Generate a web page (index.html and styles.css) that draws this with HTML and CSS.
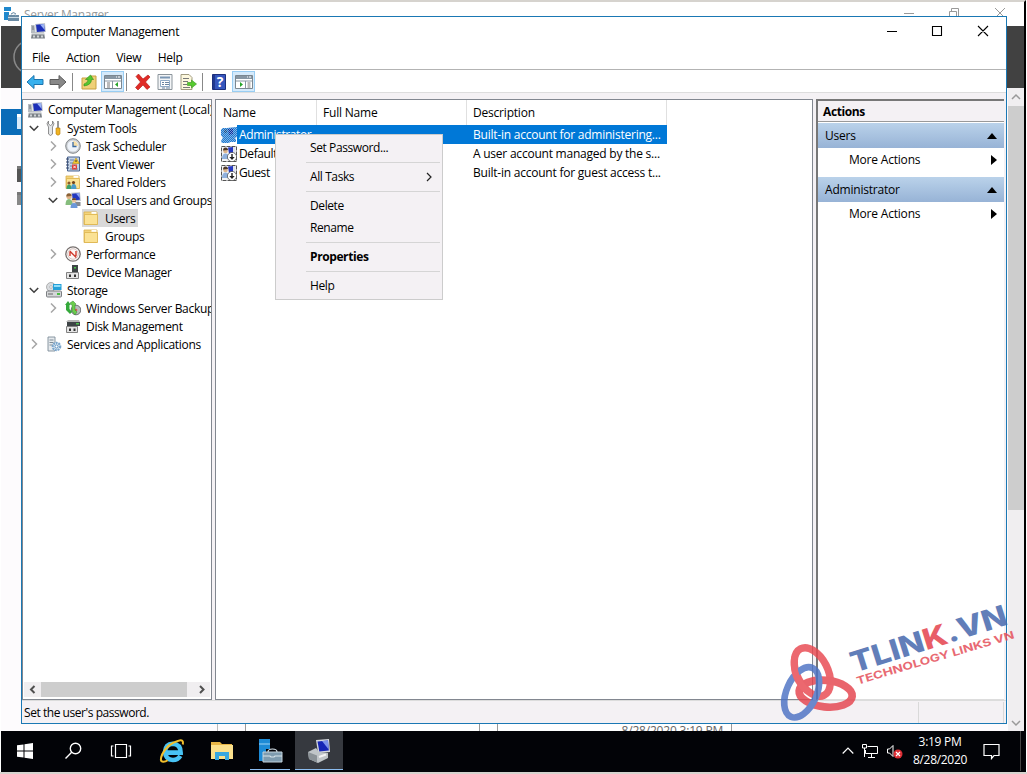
FILE: index.html
```html
<!DOCTYPE html>
<html lang="en">
<head>
    <meta charset="UTF-8">
    <meta name="viewport" content="width=device-width, initial-scale=1.0">
    <title>Computer Management</title>
    <link rel="stylesheet" href="styles.css">
</head>
<body>
    <!-- shared icons -->
    <svg class="sprite" width="0" height="0">
        <symbol id="computer" viewBox="0 0 16 16">
            <path d="M5 1l10-1 1 9-10 1z" fill="#c3c8ce"/>
            <path d="M6 1.800l8-.8 1 7.200-8 .8z" fill="#1c2fb8"/>
            <path d="M10 1.500l4-.4.700 6z" fill="#9db4f5"/>
            <path d="M1 2h3.500l1 8H1z" fill="#b6bcc2"/>
            <path d="M2 4h2M2 6h2" stroke="#70777d"/>
            <path d="M2 9.500h12l1 6H1z" fill="#7c8288"/>
            <path d="M2 9.500h12v2H2z" fill="#d5d8da"/>
            <path d="M3 12.500h2v2H3zM7 12.500h2v2H7zM11 12.500h2v2h-2z" fill="#d0d4d6"/>
        </symbol>
        <symbol id="tools" viewBox="0 0 16 16">
            <path d="M2.500 1v3l2 1.500 2-1.500V1q3 2.500 0 6v7q-2 3-4 0V7q-3-3.500 0-6z" fill="#e4e6e8" stroke="#777" stroke-width=".8"/>
            <path d="M11 1h2v7h-2z" fill="#999"/>
            <path d="M10 8h4v6q-2 2.500-4 0z" fill="#f0b323" stroke="#b67c0b" stroke-width=".6"/>
        </symbol>
        <symbol id="clock" viewBox="0 0 16 16">
            <circle cx="8" cy="8" r="7.300" fill="#c9cdd1" stroke="#84888c"/>
            <circle cx="8" cy="8" r="5.600" fill="#eef3fa"/>
            <path d="M8 3A5 5 0 0 1 13 8H8z" fill="#f7dfa8"/>
            <path d="M8 4v4.500h3.500" fill="none" stroke="#3b6aa0" stroke-width="1.300"/>
        </symbol>
        <symbol id="event" viewBox="0 0 16 16">
            <path d="M2.500 1h12v14h-12z" fill="#c4d3e6" stroke="#4a6490"/>
            <path d="M5 4h4M5 7h3M5 10h3M5 13h8" stroke="#6781a8"/>
            <path d="M1 3h3M1 6h3M1 9h3M1 12h3" stroke="#39486a"/>
            <path d="M11 2l3.500 5.500h-7z" fill="#f5c72c" stroke="#ad8208" stroke-width=".5"/>
            <path d="M11 4v2" stroke="#333"/>
            <path d="M7 8.500h5v5H7z" fill="#d93b35"/>
            <path d="M8.300 9.700l2.500 2.500m0-2.500l-2.500 2.500" stroke="#fff" stroke-width=".9"/>
        </symbol>
        <symbol id="folder" viewBox="0 0 16 16">
            <path d="M1 2h13v12.500H1z" fill="#f3d47c" stroke="#d9b04c" stroke-width=".8"/>
            <path d="M8.500 2h5v1.800h-5z" fill="#fff"/>
            <path d="M1.500 4.500h13v10h-13z" fill="#fbe294" stroke="#dcb44c" stroke-width=".8"/>
        </symbol>
        <symbol id="shared" viewBox="0 0 16 16">
            <use href="#folder"/>
            <circle cx="4" cy="9" r="1.600" fill="#8a5a2a"/>
            <circle cx="8.500" cy="8.500" r="1.600" fill="#734318"/>
            <path d="M1.500 15q0-4.500 2.500-4.500T6.500 15z" fill="#3da06b"/>
            <path d="M6 15q0-5 2.700-5t2.800 5z" fill="#4b9ac9"/>
        </symbol>
        <symbol id="localusers" viewBox="0 0 16 16">
            <path d="M6 .8L15 0l1 9-9 1z" fill="#c8ccd2"/>
            <path d="M7 1.800l7.200-.7.700 6.700-7 .8z" fill="#2238c0"/>
            <path d="M11 1.400l3.200-.3.500 5z" fill="#90a8f2"/>
            <path d="M10 10h5.500v4H11z" fill="#858a90"/>
            <circle cx="4" cy="4.500" r="2.600" fill="#e0b488"/>
            <path d="M1.300 4.500Q1.300 1.300 4 1.300T6.500 4z" fill="#8b6136"/>
            <path d="M.5 13q0-6 3.500-6t4 6z" fill="#86bd7d"/>
            <circle cx="9" cy="8.500" r="2.200" fill="#e8c198"/>
            <path d="M6.800 8q.3-2 2.200-2t2.200 2z" fill="#6c4a2c"/>
            <path d="M5.500 16q0-5 3.500-5t3.500 5z" fill="#6c98d9"/>
        </symbol>
        <symbol id="perf" viewBox="0 0 16 16">
            <circle cx="8" cy="8" r="7.200" fill="#fff" stroke="#77706e" stroke-width="1.300"/>
            <circle cx="8" cy="8" r="5.300" fill="#fdf6f4" stroke="#c4aaa5" stroke-width=".7"/>
            <path d="M5 10V6M4.700 5l6.600 6.600M11 10V5" fill="none" stroke="#cf3a2d" stroke-width="1.400"/>
        </symbol>
        <symbol id="device" viewBox="0 0 16 16">
            <path d="M7 1h6v7H7z" fill="#3f4546"/>
            <path d="M9 3h2v1.500H9z" fill="#4cc24d"/>
            <path d="M1.500 8.500h12v6h-12z" fill="#e5e5e5" stroke="#818181"/>
            <path d="M4 10.500h2V13H4zM9 10.500h2V13H9z" fill="#333"/>
        </symbol>
        <symbol id="storage" viewBox="0 0 16 16">
            <circle cx="5" cy="5" r="4.500" fill="#d9dcdf" stroke="#969696" stroke-width=".7"/>
            <circle cx="5" cy="5" r="1.300" fill="#fff" stroke="#888" stroke-width=".5"/>
            <path d="M7 2h8.500v6H7z" fill="#24a0d8"/>
            <path d="M8 3h6.500v2H8z" fill="#8fdcf8"/>
            <rect x=".5" y="9" width="15" height="6" rx="1" fill="#d4d6d8" stroke="#7c7f82"/>
            <path d="M2 12h5" stroke="#666"/>
            <path d="M11 11h3v2h-3z" fill="#49bd43"/>
        </symbol>
        <symbol id="backup" viewBox="0 0 16 16">
            <circle cx="11" cy="10" r="4.800" fill="#b9bcbe" stroke="#6f7275"/>
            <circle cx="11" cy="10" r="1.300" fill="#d85a50"/>
            <path d="M0 5l3-4 3 4H4.500v4L7 12l-2 2-4-4V5z" fill="#35a93b"/>
            <path d="M5 3l3-2 3 3-1 1v5l2 2-2 3-3-4V5z" fill="#6ccc4c" stroke="#2d8a2c" stroke-width=".5"/>
        </symbol>
        <symbol id="disk" viewBox="0 0 16 16">
            <path d="M2 4h13v4H2z" fill="#3e4446"/>
            <path d="M1 4l2-2h11l1 2z" fill="#b5b5b5"/>
            <path d="M11 5h3v1.500h-3z" fill="#4cc24d"/>
            <path d="M1.500 8.500h11v6h-11z" fill="#e5e5e5" stroke="#818181"/>
            <path d="M4 10.500h2V13H4zM8.500 10.500h2V13h-2z" fill="#333"/>
        </symbol>
        <symbol id="services" viewBox="0 0 16 16">
            <path d="M2 1h7v14H2z" fill="#e6eaed" stroke="#7e8d98" stroke-width=".9"/>
            <path d="M3.500 4h4M3.500 6.500h4M3.500 9h4" stroke="#7e8d98"/>
            <circle cx="10.500" cy="10.500" r="3.700" fill="#e3eef8" stroke="#7ba6cc" stroke-width="2.200" stroke-dasharray="1.900 .8"/>
            <circle cx="10.500" cy="10.500" r="1.600" fill="#fff" stroke="#5b8fbd"/>
        </symbol>
        <symbol id="user" viewBox="0 0 16 16">
            <path d="M.5.5h15v15H.5z" fill="#f4f4f6" stroke="#555" stroke-dasharray="4 1"/>
            <path d="M7 1.500l5-.5v7H8z" fill="#2538c0"/>
            <path d="M12 1h2.500v7H12z" fill="#dfe3ea"/>
            <circle cx="4.500" cy="5" r="2.300" fill="#dcb48c"/>
            <path d="M2 4.500q0-3 2.500-3T7 4z" fill="#4c392b"/>
            <path d="M1 13q0-5.500 3.500-5.500T8 13z" fill="#8fb0dd"/>
            <circle cx="11" cy="11" r="4.600" fill="#fff" stroke="#444" stroke-width=".7"/>
            <path d="M10.300 8h1.400v3h2L11 14l-2.700-3h2z" fill="#222"/>
        </symbol>
        <!-- selected icons get a checkered tint -->
        <pattern id="checker" width="2" height="2" patternUnits="userSpaceOnUse">
            <path d="M0 0h1v1H0zM1 1h1v1H1z" fill="#a9cdee"/>
        </pattern>
        <symbol id="user-selected" viewBox="0 0 16 16">
            <path d="M6 1l10-1v10l-3 1 2 1v3H9l-1 1H1l-1-2 2-3-2-3V3l2-2z" fill="#1f78cf"/>
            <path d="M7 2l5-.5V7L8 8z" fill="#0b2f9e"/>
            <path d="M3 3q2-2 3 0v3H3z" fill="#154f8c"/>
            <path d="M6 1l10-1v10l-3 1 2 1v3H9l-1 1H1l-1-2 2-3-2-3V3l2-2z" fill="url(#checker)" opacity=".7"/>
        </symbol>
        <symbol id="chev-right" viewBox="0 0 10 10"><path d="M3 .5L7.500 5 3 9.500" fill="none" stroke="#a6a6a6" stroke-width="1.500"/></symbol>
        <symbol id="chev-down" viewBox="0 0 10 10"><path d="M.8 3L5 7.200 9.200 3" fill="none" stroke="#404040" stroke-width="1.600"/></symbol>
        <symbol id="arrow" viewBox="0 0 18 16"><path d="M1 8l7-6.500v4h9v5H8v4z" stroke-linejoin="round"/></symbol>
        <symbol id="console" viewBox="0 0 18 16">
            <path d="M.5 1.500h17v13H.5z" fill="#fff" stroke="#7b8790"/>
            <path d="M1 2h16v3H1z" fill="#8796a3"/>
            <path d="M12 3h1M14 3h2" stroke="#fff"/>
            <path d="M1 7h16" stroke="#8796a3"/>
        </symbol>
    </svg>

    <div class="desktop">
        <!-- Server Manager, mostly hidden -->
        <div class="server-manager">
            <div class="sm-title">
                <svg width="16" height="16" viewBox="0 0 16 16"><path d="M1 1h7v4H1zM1 6h5v8H1z" fill="#1e87cc"/><path d="M5 9h11v6H5z" fill="#6b8ba4"/><path d="M8 9q0-3 5 0M5 11.500h11" fill="none" stroke="#c9dae6"/><path d="M8 8q2.500-3 5 0" fill="none" stroke="#6b8ba4"/></svg>
                <span>Server Manager</span>
                <svg class="sm-controls" width="112" height="16" viewBox="0 0 112 16" fill="none" stroke="#999"><path d="M4 7.500h10M49.500 5.500h7v8h-7zM51.500 5V2.500h7v8H57M95 2l10 10M105 2L95 12"/></svg>
            </div>
            <div class="sm-band">
                <svg width="21" height="62" viewBox="0 0 21 62"><circle cx="30" cy="31" r="17" fill="none" stroke="#888" stroke-width="1.500"/></svg>
            </div>
            <div class="sm-main">
                <div class="sm-nav">
                    <div class="sm-nav-active"><i></i></div>
                    <i class="sm-nav-item"></i>
                    <i class="sm-nav-item light"></i>
                </div>
                <div class="sm-tiles">
                    <span class="tile-one"></span>
                    <span class="tile-two"></span>
                    <span class="tile-three">8/28/2020 3:19 PM</span>
                </div>
                <div class="sm-scroll">
                    <svg width="10" height="10" viewBox="0 0 10 10"><path d="M1 7l4-4 4 4" fill="none" stroke="#999" stroke-width="1.500"/></svg>
                    <div class="sm-thumb"></div>
                    <svg width="10" height="10" viewBox="0 0 10 10"><path d="M1 3l4 4 4-4" fill="none" stroke="#999" stroke-width="1.500"/></svg>
                </div>
            </div>
        </div>

        <!-- Computer Management -->
        <div class="window">
            <div class="titlebar">
                <svg width="16" height="16"><use href="#computer"/></svg>
                <span>Computer Management</span>
                <svg class="controls" width="104" height="12" viewBox="0 0 104 12" fill="none" stroke="#000" stroke-width="1.100"><path d="M1 6.500h10M46.500 1.500h9v9h-9zM92 1l10 10M102 1L92 11"/></svg>
            </div>
            <div class="menubar">
                <span>File</span><span>Action</span><span>View</span><span>Help</span>
            </div>
            <div class="toolbar">
                <svg class="back" width="18" height="16"><use href="#arrow" fill="#37b1ee" stroke="#1c74ae"/></svg>
                <svg class="forward" width="18" height="16"><use href="#arrow" transform="translate(18 0) scale(-1 1)" fill="#888" stroke="#5c5c5c"/></svg>
                <i class="sep"></i>
                <svg class="up" width="16" height="16" viewBox="0 0 16 16"><path d="M1 4h8l1-2h5v13H1z" fill="#f0d078" stroke="#c9a040"/><path d="M3 10q4-1 4-4.500H4.500L9.500 1l3 4.500h-2q0 5.500-7.500 6.500z" fill="#55c62e" stroke="#2d8e1c" stroke-width=".6"/></svg>
                <span class="tool-on left"><svg width="18" height="16" viewBox="0 0 18 16"><use href="#console"/><path d="M8.500 7v7" stroke="#8796a3"/><path d="M3 9h3M3 11h3M3 13h3" stroke="#777"/><path d="M14 8v5l-3-2.500z" fill="#27a52b"/></svg></span>
                <i class="sep"></i>
                <svg class="del" width="18" height="16" viewBox="0 0 18 16"><path d="M2 2.500L4.500 0 9 5l5-4 2 2-4.500 5 4.500 5-3 2.500L9 11l-5 5-2.500-2.500L6.500 8z" fill="#e02b26" stroke="#b01412" stroke-width=".6"/></svg>
                <svg class="props" width="16" height="16" viewBox="0 0 16 16"><path d="M1 .5h14v15H1z" fill="#f3f5f7" stroke="#8b949b"/><path d="M3 3.500h10" stroke="#7a96b4" stroke-width="2"/><path d="M3.500 6.500h9v6h-9z" fill="#fff" stroke="#8faac6"/><path d="M5 8.500h2M8 8.500h4M5 10.500h2M8 10.500h4M5 14h3M9 14h4" stroke="#6b85a2"/></svg>
                <svg class="export" width="17" height="16" viewBox="0 0 17 16"><path d="M1 .5h8l3 3v12H1z" fill="#fdf8de" stroke="#a19b80"/><path d="M3 4.500h6M3 7.500h5M3 10.500h4M3 13.500h7" stroke="#777"/><path d="M7.500 8.500h4V6l5 4-5 4v-2.500h-4z" fill="#57cb2f" stroke="#37941d" stroke-width=".6"/></svg>
                <i class="sep"></i>
                <svg class="help" width="14" height="16" viewBox="0 0 14 16"><path d="M.5.5h13v15H.5z" fill="#3556bd" stroke="#1c2f7d"/><path d="M1 1h2v14H1z" fill="#20398f"/><text x="8" y="13" text-anchor="middle">?</text></svg>
                <span class="tool-on"><svg width="18" height="16" viewBox="0 0 18 16"><use href="#console"/><path d="M10.500 7v7" stroke="#8796a3"/><path d="M12.500 9h3M12.500 11h3M12.500 13h3" stroke="#777"/><path d="M5 8v5l3-2.500z" fill="#27a52b"/></svg></span>
            </div>

            <div class="content">
                <div class="tree">
                    <div class="row root"><svg class="icon"><use href="#computer"/></svg><span>Computer Management (Local)</span></div>
                    <div class="row l1"><svg class="chev"><use href="#chev-down"/></svg><svg class="icon"><use href="#tools"/></svg><span>System Tools</span></div>
                    <div class="row l2"><svg class="chev"><use href="#chev-right"/></svg><svg class="icon"><use href="#clock"/></svg><span>Task Scheduler</span></div>
                    <div class="row l2"><svg class="chev"><use href="#chev-right"/></svg><svg class="icon"><use href="#event"/></svg><span>Event Viewer</span></div>
                    <div class="row l2"><svg class="chev"><use href="#chev-right"/></svg><svg class="icon"><use href="#shared"/></svg><span>Shared Folders</span></div>
                    <div class="row l2"><svg class="chev"><use href="#chev-down"/></svg><svg class="icon"><use href="#localusers"/></svg><span>Local Users and Groups</span></div>
                    <div class="row l3"><div class="selected"><svg class="icon"><use href="#folder"/></svg><span>Users</span></div></div>
                    <div class="row l3"><div><svg class="icon"><use href="#folder"/></svg><span>Groups</span></div></div>
                    <div class="row l2"><svg class="chev"><use href="#chev-right"/></svg><svg class="icon"><use href="#perf"/></svg><span>Performance</span></div>
                    <div class="row l2"><svg class="chev"></svg><svg class="icon"><use href="#device"/></svg><span>Device Manager</span></div>
                    <div class="row l1"><svg class="chev"><use href="#chev-down"/></svg><svg class="icon"><use href="#storage"/></svg><span>Storage</span></div>
                    <div class="row l2"><svg class="chev"><use href="#chev-right"/></svg><svg class="icon"><use href="#backup"/></svg><span>Windows Server Backup</span></div>
                    <div class="row l2"><svg class="chev"></svg><svg class="icon"><use href="#disk"/></svg><span>Disk Management</span></div>
                    <div class="row l1"><svg class="chev"><use href="#chev-right"/></svg><svg class="icon"><use href="#services"/></svg><span>Services and Applications</span></div>
                    <div class="hscroll">
                        <svg width="17" height="15" viewBox="0 0 17 15"><path d="M10.500 4L7 7.500l3.500 3.500" fill="none" stroke="#505050" stroke-width="2"/></svg>
                        <div class="hthumb"></div>
                        <svg width="17" height="15" viewBox="0 0 17 15"><path d="M7 4l3.500 3.500L7 11" fill="none" stroke="#505050" stroke-width="2"/></svg>
                    </div>
                </div>

                <div class="list">
                    <div class="list-head"><span>Name</span><span>Full Name</span><span>Description</span></div>
                    <div class="list-row active"><svg class="icon"><use href="#user-selected"/></svg><div><span>Administrator</span><span></span><span>Built-in account for administering...</span></div></div>
                    <div class="list-row"><svg class="icon"><use href="#user"/></svg><div><span>DefaultAcco...</span><span></span><span>A user account managed by the s...</span></div></div>
                    <div class="list-row"><svg class="icon"><use href="#user"/></svg><div><span>Guest</span><span></span><span>Built-in account for guest access t...</span></div></div>
                </div>

                <div class="actions">
                    <div class="actions-title">Actions</div>
                    <div class="group"><span>Users</span><svg width="10" height="6" viewBox="0 0 10 6"><path d="M5 0l5 6H0z"/></svg></div>
                    <div class="more"><span>More Actions</span><svg width="6" height="10" viewBox="0 0 6 10"><path d="M0 0l6 5-6 5z"/></svg></div>
                    <div class="group"><span>Administrator</span><svg width="10" height="6" viewBox="0 0 10 6"><path d="M5 0l5 6H0z"/></svg></div>
                    <div class="more"><span>More Actions</span><svg width="6" height="10" viewBox="0 0 6 10"><path d="M0 0l6 5-6 5z"/></svg></div>
                </div>
            </div>
            <div class="statusbar"><span>Set the user's password.</span><i></i></div>
        </div>

        <div class="context-menu">
            <div class="item">Set Password...</div>
            <hr>
            <div class="item">All Tasks<svg width="10" height="10" viewBox="0 0 10 10"><path d="M3 1l4 4-4 4" fill="none" stroke="#222" stroke-width="1.200"/></svg></div>
            <hr>
            <div class="item">Delete</div>
            <div class="item">Rename</div>
            <hr>
            <div class="item bold">Properties</div>
            <hr>
            <div class="item">Help</div>
        </div>

        <div class="taskbar">
            <span class="task"><svg width="16" height="16" viewBox="0 0 16 16"><path d="M0 2.300L6.500 1.400v6.100H0zM7.500 1.200L16 0v7.500H7.500zM0 8.500h6.500v6.100L0 13.700zM7.500 8.500H16V16l-8.500-1.200z" fill="#fff"/></svg></span>
            <span class="task"><svg width="18" height="18" viewBox="0 0 18 18" fill="none" stroke="#fff" stroke-width="1.400"><circle cx="11.500" cy="6.500" r="5.200"/><path d="M7.700 10.300L1.500 16.500"/></svg></span>
            <span class="task"><svg width="22" height="16" viewBox="0 0 22 16" fill="none" stroke="#fff" stroke-width="1.200"><path d="M5.500 1.500h11v13h-11zM3.500 3h-2v10h2M18.500 3h2v10h-2"/></svg></span>
            <span class="task ie"><svg width="26" height="26" viewBox="0 0 24 24"><path d="M19.700 16.500Q17.500 20.300 12.800 20.300 6 20 5.500 12.800 6 5.700 12.700 5.300q7.300.5 7.300 8.200H7" fill="none" stroke="#48c3f4" stroke-width="4.200"/><path d="M22 6q1-5-4-3.500Q8 5 3 15q-3 7 1 7 2 0 4-1.500" fill="none" stroke="#f2bf2d" stroke-width="1.900"/></svg></span>
            <span class="task explorer"><svg width="24" height="20" viewBox="0 0 24 20"><path d="M1 1h9l2 2h10v15H1z" fill="#e7b545"/><path d="M1 4h22v14H1z" fill="#fbe08c"/><path d="M5 11h14v8h-4v-4H9v4H5z" fill="#37a7e0"/></svg></span>
            <span class="task running"><svg width="25" height="26" viewBox="0 0 25 26"><path d="M1 1h11v10H8v4H5v8H1z" fill="#1d8bd6"/><path d="M1 6h11" stroke="#9fd4f5"/><path d="M5 14h19v10H5z" fill="#7f9caf" stroke="#c2d2dc"/><path d="M10 14q0-3 4.500-3t4.500 3M5 18h7l1 1h3l1-1h7" fill="none" stroke="#d7e3ea" stroke-width="1.200"/></svg></span>
            <span class="task running focus"><svg width="24" height="24" viewBox="0 0 24 24"><path d="M9 1l13-1 1 13-12 1z" fill="#d3d7dc"/><path d="M10.500 2.500l10.500-1 .8 10-9.500 1z" fill="#1625b5"/><path d="M15 2l6-.5.7 9z" fill="#7c92eb"/><path d="M1 13l8-4 3 4 9 1v5l-10 5-9-4z" fill="#c0c5c8"/><path d="M1 13l9 3.500v7l-8-3.500z" fill="#8b9297"/><path d="M12 18l7-2.500" stroke="#f2f2f2" stroke-width="2"/></svg></span>
            <div class="tray">
                <svg width="12" height="8" viewBox="0 0 12 8"><path d="M.7 6.500L6 1.200l5.300 5.300" fill="none" stroke="#fff" stroke-width="1.200"/></svg>
                <svg width="16" height="14" viewBox="0 0 16 14" fill="none" stroke="#fff"><path d="M5.500 2.500h10v7H3.500V6M.5.5h4v3.500h-4zM2.500 4v9M9.500 10v3M6 13.500h7"/></svg>
                <svg width="17" height="15" viewBox="0 0 17 15"><path d="M1.500 5h2L7 1.500v11L3.500 9h-2z" fill="none" stroke="#fff"/><circle cx="12" cy="10" r="4.500" fill="#dc2e35"/><path d="M10 8l4 4m0-4l-4 4" stroke="#fff" stroke-width="1.200"/></svg>
                <div class="time"><span>3:19 PM</span><span>8/28/2020</span></div>
                <svg width="17" height="17" viewBox="0 0 17 17"><path d="M1 1.500h15v11h-5L8.500 15.500V12.500H1z" fill="none" stroke="#fff" stroke-width="1.200"/></svg>
            </div>
        </div>

        <svg class="watermark" width="267" height="140" viewBox="0 0 801 420">
            <g fill="none" opacity=".82">
                <ellipse cx="157" cy="246" rx="46" ry="78" transform="rotate(-27 157 246)" stroke="#e94850" stroke-width="22"/>
                <ellipse cx="197" cy="311" rx="80" ry="40" transform="rotate(6 197 311)" stroke="#e5434d" stroke-width="23"/>
                <ellipse cx="125" cy="307" rx="45" ry="80" transform="rotate(24 125 307)" stroke="#4c72c4" stroke-width="20"/>
                <path d="M104 200Q94 262 142 304" stroke="#e94850" stroke-width="20"/>
            </g>
            <g transform="translate(282 249) rotate(-17.500)" opacity=".85">
                <text class="brand" textLength="488" lengthAdjust="spacingAndGlyphs">TLIN<tspan class="red">K</tspan>.VN</text>
            </g>
            <g transform="translate(293 284) rotate(-16.500)" opacity=".85">
                <text class="tagline" textLength="492" lengthAdjust="spacingAndGlyphs">TECHNOLOGY LINKS VN</text>
            </g>
        </svg>
    </div>
</body>
</html>
```

FILE: styles.css
```css
* {
    box-sizing: border-box;
}

body {
    margin: 0;
    font-family: "Open Sans", "Noto Sans", sans-serif;
    font-size: 12px;
    letter-spacing: -0.3px;
    color: #000;
    white-space: nowrap;
}

svg {
    display: block;
    flex: none;
}

.sprite {
    position: absolute;
}

.desktop {
    position: relative;
    width: 1027px;
    height: 774px;
    overflow: hidden;
    background: #fff;
    border-bottom: 2px solid #d6d3ce;
    display: flex;
    flex-direction: column;
}

/* background window */
.server-manager {
    height: 731px;
    width: 1026px;
    border-top: 2px solid #d6d3ce;
    border-right: 2px solid #000;
    padding-left: 1px;
    display: flex;
    flex-direction: column;
}

.sm-title {
    height: 24px;
    padding: 4px 12px 0 2px;
    display: flex;
    gap: 5px;
    color: #999;
}

.sm-controls {
    margin-left: auto;
}

.sm-band {
    height: 62px;
    background: #414141;
}

.sm-main {
    flex: 1;
    display: flex;
    background: #fdfbfd;
}

.sm-nav {
    width: 216px;
    padding-top: 21px;
}

.sm-nav-active {
    height: 26px;
    background: #0a6cb8;
    padding: 5px 0 0 16px;
}

.sm-nav-active i,
.sm-nav-item {
    display: block;
    width: 5px;
    height: 15px;
    background: #d6eafa;
    border-top: 3px solid #fff;
}

.sm-nav-item {
    margin: 31px 0 0 16px;
    height: 16px;
    background: #555;
    border-top-color: #777;
}

.sm-nav-item.light {
    margin-top: 10px;
    height: 13px;
    background: #888;
}

.sm-tiles {
    flex: 1;
    align-self: flex-end;
    height: 8px;
    overflow: hidden;
    display: flex;
    border-left: 1px solid #bbb;
    padding-left: 27px;
    letter-spacing: -0.2px;
}

.sm-tiles span {
    height: 30px;
    border: solid #999;
    border-width: 0 1px;
    background: #fff;
}

.tile-one {
    width: 235px;
}

.tile-two {
    width: 19px;
    margin-left: -1px;
}

.sm-tiles .tile-three {
    width: 235px;
    margin-left: -1px;
    padding-right: 8px;
    text-align: right;
    line-height: 15px;
    color: #666;
}

.sm-scroll {
    width: 16px;
    background: #f0eef0;
    display: flex;
    flex-direction: column;
    align-items: center;
    padding: 4px 0 3px;
}

.sm-thumb {
    width: 16px;
    height: 404px;
    margin: 4px 0 auto;
    background: #cdcdcd;
}

/* main window */
.window {
    position: absolute;
    left: 21px;
    top: 16px;
    width: 986px;
    height: 708px;
    border: 1px solid #1a78b4;
    background: #f4f1f4;
    display: flex;
    flex-direction: column;
}

.titlebar {
    height: 30px;
    background: #fff;
    display: flex;
    align-items: center;
    padding: 0 16px 2px 8px;
    gap: 5px;
}

.controls {
    margin-left: auto;
}

.menubar {
    height: 23px;
    background: #fff;
    border-bottom: 1px solid #b3b3b3;
    display: flex;
    align-items: center;
    padding: 0 0 2px 10px;
    gap: 16.500px;
}

.toolbar {
    height: 23px;
    background: #fff;
    border-bottom: 1px solid #ddd;
    display: flex;
    align-items: center;
    padding: 1px 0 0 4px;
}

.forward {
    margin: 0 5px;
}

.sep {
    width: 1px;
    height: 18px;
    background: #888;
}

.up {
    margin: 0 4px 0 8px;
}

.tool-on {
    width: 23px;
    height: 21px;
    border: 1px solid #99cdf3;
    background: #d5eafb;
    display: flex;
    align-items: center;
    justify-content: center;
}

.tool-on.left {
    margin-right: 2px;
}

.del {
    margin: 0 5px 0 7px;
}

.export {
    margin: 0 5px 0 7px;
}

.help {
    margin: 0 6px 0 9px;
}

.help text {
    font-weight: bold;
    font-size: 14px;
    fill: #fff;
}

.content {
    height: 607px;
    flex: none;
    padding-top: 6px;
    display: flex;
}

.icon {
    width: 16px;
    height: 16px;
}

.chev {
    width: 10px;
    height: 10px;
}

.tree {
    width: 190px;
    height: 601px;
    background: #fff;
    border: 1px solid #828790;
    overflow: hidden;
    display: flex;
    flex-direction: column;
    margin-right: 3px;
}

.row {
    height: 18px;
    flex: none;
    display: flex;
    align-items: center;
}

.row:first-child {
    height: 19px;
}

.root {
    padding-left: 4px;
    gap: 5px;
}

.l1 {
    padding-left: 6px;
    gap: 5px;
}

.l1 .icon {
    margin-left: 2px;
}

.l2 {
    padding-left: 25px;
    gap: 5px;
}

.l2 .icon {
    margin-left: 2px;
}

.l3 {
    padding-left: 59px;
}

.l3 div {
    display: flex;
    align-items: center;
    height: 18px;
    gap: 6px;
    padding: 0 3px 0 1px;
}

.l3 .selected {
    background: #d9d9d9;
}

.hscroll {
    margin: auto 1px 2px;
    height: 15px;
    background: #f0eef0;
    display: flex;
}

.hthumb {
    width: 146px;
    margin-right: auto;
    background: #cdcdcd;
}

.list {
    width: 598px;
    height: 601px;
    background: #fff;
    border: 1px solid #828790;
    margin-right: 3px;
}

.list-head {
    height: 25px;
    display: flex;
    line-height: 25px;
    letter-spacing: -0.2px;
}

.list-head span {
    width: 150px;
    padding-left: 6px;
    border-right: 1px solid #e0e0e0;
}

.list-head span:first-child {
    width: 101px;
    padding-left: 7px;
}

.list-head span:last-child {
    width: 200px;
}

.list-row {
    height: 19px;
    display: flex;
    align-items: center;
    padding-left: 5px;
}

.list-row div {
    width: 430px;
    line-height: 19px;
    padding-left: 2px;
    display: flex;
}

.list-row span {
    width: 78px;
    letter-spacing: -0.4px;
}

.list-row span:nth-child(2) {
    width: 156px;
}

.list-row span:nth-child(3) {
    letter-spacing: -0.23px;
}

.list-row.active div {
    background: #0078d7;
    color: #fff;
}

.actions {
    width: 188px;
    height: 601px;
    background: #fff;
    border-top: 2px solid #777;
    border-left: 2px solid #777;
    border-bottom: 1px solid #ddd;
    letter-spacing: -0.2px;
}

.actions-title {
    height: 21px;
    line-height: 21px;
    padding-left: 5px;
    font-weight: bold;
    background: #f4f1f4;
    border-bottom: 1px solid #999;
    margin-bottom: 1px;
    letter-spacing: -0.4px;
}

.group {
    height: 25px;
    display: flex;
    align-items: center;
    justify-content: space-between;
    padding: 0 7px;
    background: linear-gradient(#bad2ea, #97b3d6);
}

.more {
    height: 24px;
    display: flex;
    align-items: center;
    justify-content: space-between;
    padding: 0 7px 1px 31px;
    margin-bottom: 5px;
}

.statusbar {
    flex: 1;
    border-top: 1px solid #dcdcdc;
    padding: 0 2px 0 2px;
    display: flex;
    align-items: center;
    justify-content: space-between;
    letter-spacing: -0.45px;
}

.statusbar i {
    width: 86px;
    height: 21px;
    border: solid #d9d9d9;
    border-width: 0 1px;
}

/* popup over the users list */
.context-menu {
    position: absolute;
    left: 275px;
    top: 134px;
    width: 168px;
    height: 166px;
    padding: 2px;
    background: #f4f1f4;
    border: 1px solid #ccc;
    letter-spacing: -0.4px;
}

.item {
    height: 22px;
    line-height: 22px;
    padding: 0 6px 0 32px;
    display: flex;
    align-items: center;
    justify-content: space-between;
}

.item.bold {
    font-weight: bold;
}

.context-menu hr {
    height: 1px;
    margin: 3px 0 3px 28px;
    border: none;
    background: #d5d5d5;
}

.taskbar {
    height: 41px;
    width: 1026px;
    background: #020307;
    display: flex;
    flex: none;
    border-left: 1px solid #fff;
}

.task {
    width: 48px;
    height: 39px;
    display: flex;
    align-items: center;
    justify-content: center;
}

.ie {
    margin-left: 3px;
}

.explorer {
    margin-left: 2px;
}

.running {
    box-shadow: inset 0 -1px #8cbdf0;
    width: 40px;
    margin: 0 5px 0 4px;
}

.focus {
    width: 48px;
    margin: 0;
    background: #36393f;
}

.tray {
    margin: 0 5px 1px auto;
    padding-right: 20px;
    border-right: 1px solid #444;
    color: #fff;
    display: flex;
    align-items: center;
    gap: 8px;
}

.time {
    width: 56px;
    margin: 0 7px 0 1px;
    display: flex;
    flex-direction: column;
    align-items: center;
    line-height: 18px;
}

.watermark {
    position: absolute;
    left: 760px;
    top: 590px;
}

.brand {
    font-family: Inter, sans-serif;
    font-weight: 800;
    font-size: 86px;
    letter-spacing: 0;
    fill: #4668ad;
}

.brand .red {
    fill: #e5434d;
}

.tagline {
    font-family: Inter, sans-serif;
    font-weight: 700;
    font-size: 32px;
    letter-spacing: 0;
    fill: #e5505a;
}
```
